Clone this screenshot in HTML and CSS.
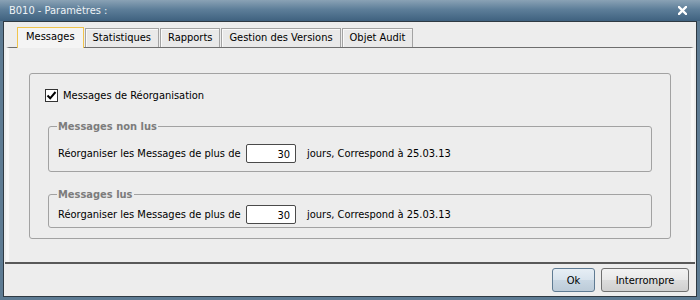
FILE: index.html
```html
<!DOCTYPE html>
<html lang="fr">
<head>
    <meta charset="UTF-8">
    <title>B010 - Paramètres</title>
    <link rel="stylesheet" href="styles.css">
</head>
<body>
    <div class="window">
        <div class="titlebar">
            <span class="title">B010 - Paramètres :</span>
            <svg class="close" width="9" height="9" viewBox="0 0 9 9">
                <path d="M1 1 L8 8 M8 1 L1 8" stroke="#fff" stroke-width="2.4" stroke-linecap="square"/>
            </svg>
        </div>
        <div class="frame">
            <div class="client">
                <div class="tabs">
                    <div class="tab active">Messages</div>
                    <div class="tab">Statistiques</div>
                    <div class="tab">Rapports</div>
                    <div class="tab">Gestion des Versions</div>
                    <div class="tab">Objet Audit</div>
                </div>
                <div class="pane">
                    <div class="group">
                        <label class="check">
                            <span class="box">
                                <svg width="11" height="11" viewBox="0 0 11 11">
                                    <path d="M1.5 5.5 L4.2 8.3 L9.5 2" fill="none" stroke="#000" stroke-width="2"/>
                                </svg>
                            </span>
                            Messages de Réorganisation
                        </label>
                        <fieldset class="sub unread">
                            <legend>Messages non lus</legend>
                            <div class="row">
                                <span class="lbl">Réorganiser les Messages de plus de</span>
                                <input class="num" type="text" value="30">
                                <span>jours, Correspond à 25.03.13</span>
                            </div>
                        </fieldset>
                        <fieldset class="sub read">
                            <legend>Messages lus</legend>
                            <div class="row">
                                <span class="lbl">Réorganiser les Messages de plus de</span>
                                <input class="num" type="text" value="30">
                                <span>jours, Correspond à 25.03.13</span>
                            </div>
                        </fieldset>
                    </div>
                </div>
                <div class="buttons">
                    <button class="btn default">Ok</button>
                    <button class="btn">Interrompre</button>
                </div>
            </div>
        </div>
    </div>
</body>
</html>
```

FILE: styles.css
```css
body {
    margin: 0;
    font-family: "DejaVu Sans Condensed", "Liberation Sans", sans-serif;
    font-size: 11px;
    color: #000;
}
.window {
    width: 700px;
    height: 300px;
    display: flex;
    flex-direction: column;
    background: #5d7b93;
}
.titlebar {
    height: 21px;
    display: flex;
    align-items: center;
    justify-content: space-between;
    padding: 0 13px 0 9px;
    background: linear-gradient(#8aa2b5, #5d7e99 45%, #3f617f);
    color: #eef2f5;
}
.frame {
    flex: 1;
    padding: 0 3px 3px;
    display: flex;
}
.client {
    flex: 1;
    border: 1px solid #2f3a43;
    background: #ededed;
    display: flex;
    flex-direction: column;
}
.tabs {
    display: flex;
    padding: 5px 0 0 13px;
    height: 20px;
    gap: 1px;
}
.tab {
    height: 18px;
    margin-top: 1px;
    padding: 0 7px;
    line-height: 18px;
    border: 1px solid #a3a3a3;
    border-bottom: none;
    background: #e9e9e9;
    box-shadow: inset 1px 1px 0 #fafafa;
}
.tab.active {
    margin-top: 0;
    height: 20px;
    padding: 0 8px;
    position: relative;
    z-index: 1;
    border-color: #f0c44c;
    background: #f4f4f4;
    box-shadow: none;
}
.pane {
    height: 215px;
    margin: 0 2px;
    border-top: 1px solid #6e6e6e;
    border-left: 3px solid #f6f6f6;
    border-right: 3px solid #f6f6f6;
    box-sizing: border-box;
    padding: 25px 20px 0;
}
.group {
    height: 166px;
    box-sizing: border-box;
    border: 1px solid #a2a2a2;
    border-radius: 3px;
    padding: 15px 18px 0;
}
.check {
    display: flex;
    align-items: center;
    gap: 5px;
    height: 13px;
    margin-left: -3px;
}
.box {
    width: 11px;
    height: 11px;
    border: 1px solid #333;
    background: #fff;
    display: flex;
}
.sub {
    margin: 0;
    border: 1px solid #a2a2a2;
    border-radius: 3px;
    padding: 0 9px;
}
.sub legend {
    padding: 0 1px;
    margin-left: -1px;
    font-weight: bold;
    color: #7c7c7c;
}
.unread {
    margin-top: 18px;
    padding-top: 11px;
    padding-bottom: 8px;
}
.read {
    margin-top: 16px;
    padding-top: 4px;
    padding-bottom: 3px;
}
.row {
    display: flex;
    align-items: center;
    height: 19px;
}
.lbl {
    width: 188px;
}
.num {
    width: 50px;
    height: 19px;
    box-sizing: border-box;
    border: 1px solid #4a4a4a;
    border-radius: 2px;
    padding: 2px 5px 0;
    text-align: right;
    font: inherit;
    background: #fff;
    margin-right: 11px;
}
.buttons {
    flex: 1;
    margin: 0 1px;
    border-top: 2px solid #595959;
    display: flex;
    justify-content: flex-end;
    align-items: flex-start;
    gap: 6px;
    padding: 4px 6px 0;
}
.btn {
    height: 24px;
    padding: 0 12px;
    font: inherit;
    border: 1px solid #707070;
    border-radius: 3px;
    background: linear-gradient(#f2f2f2, #e8e8e8 50%, #dcdcdc 51%, #cfcfcf);
}
.btn.default {
    width: 43px;
    border-color: #5f7b93;
    background: linear-gradient(#e6eef5, #d8e3ed 50%, #c9d7e3 51%, #bccbd8);
}
.btn:not(.default) {
    width: 88px;
}
```
